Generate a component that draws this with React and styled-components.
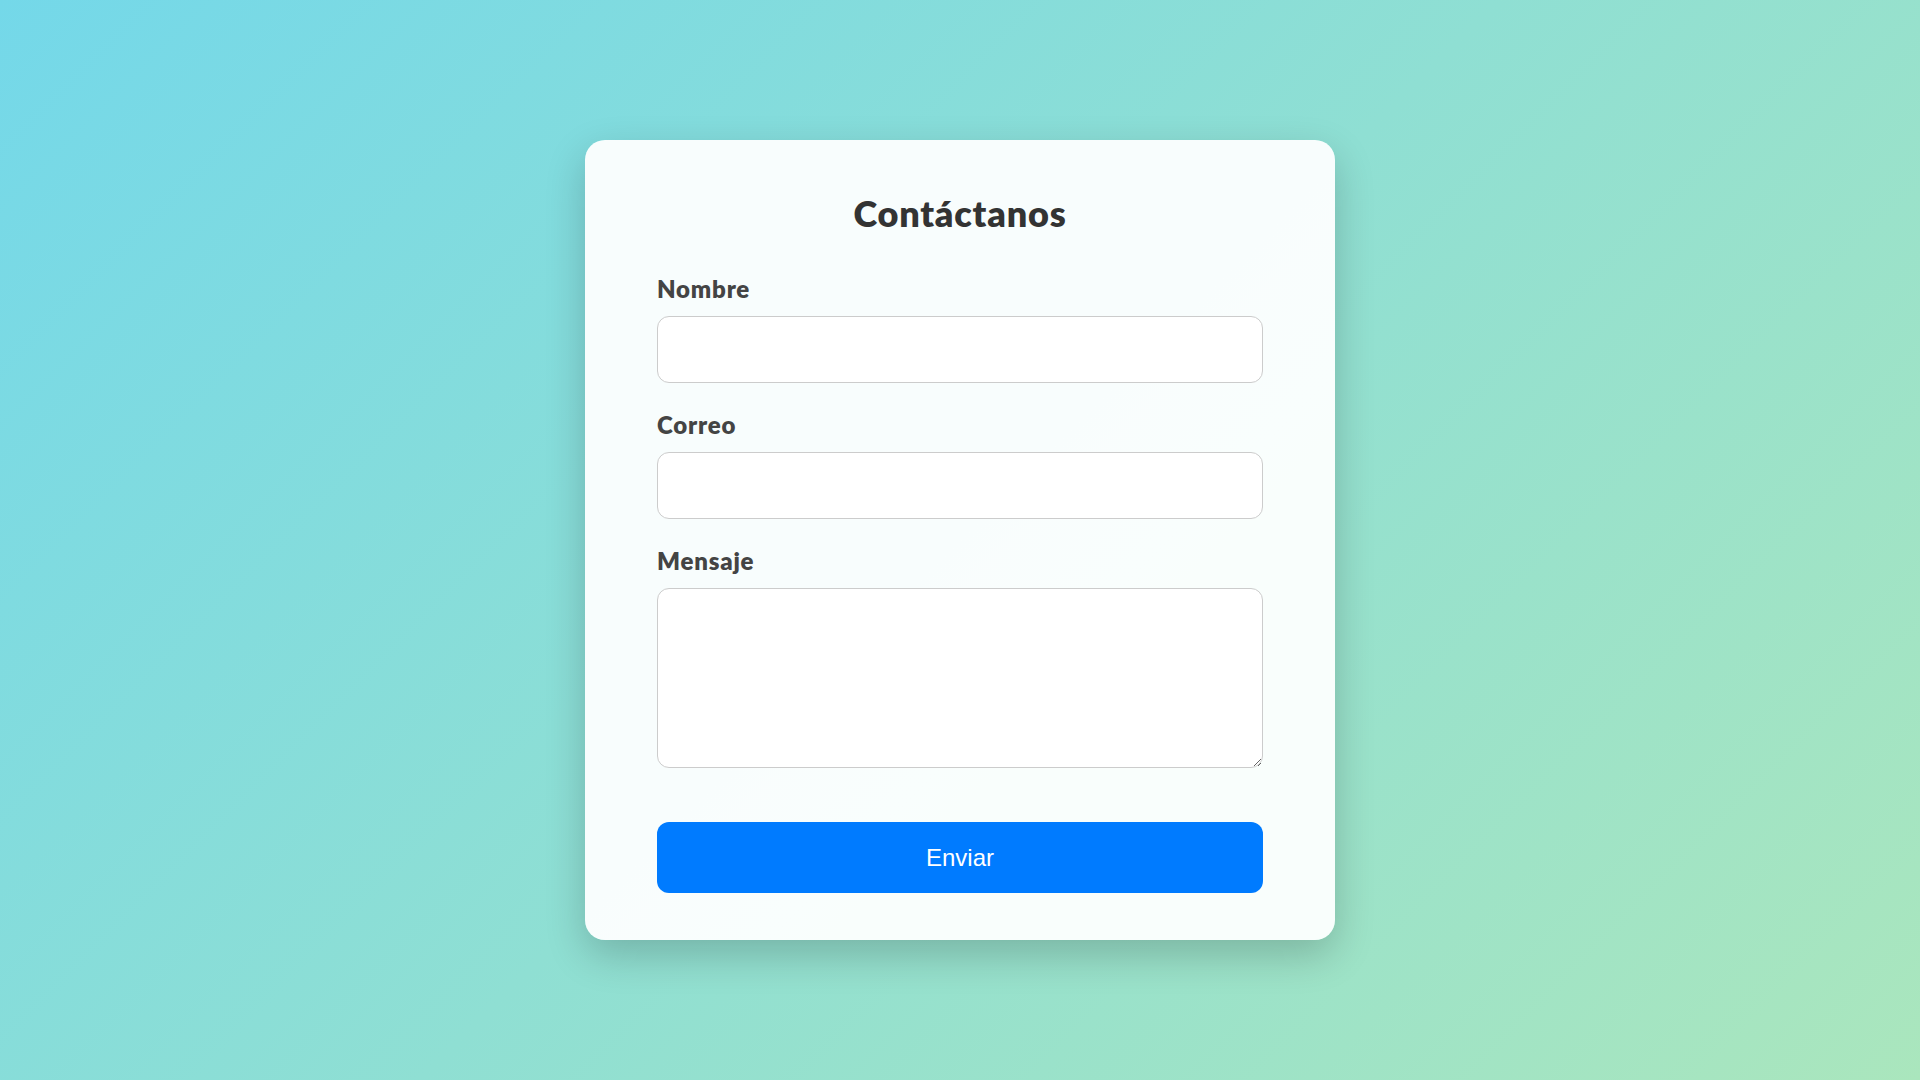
import React, { useState } from 'react';
import styled, { createGlobalStyle } from 'styled-components';

const GlobalStyle = createGlobalStyle`
    * {
        box-sizing: border-box;
    }

    body {
        margin: 0;
        font-family: 'Lato', 'Noto Sans', sans-serif;
    }
`;

const App = () => {

    const [form, setForm] = useState({ nombre: '', correo: '', mensaje: '' });

    const handleChange = (e) => {
        setForm({ ...form, [e.target.name]: e.target.value });
    }

    const handleSubmit = (e) => {
        e.preventDefault();
    }

    return (
        <Page>
            <GlobalStyle />
            <Card onSubmit={handleSubmit}>
                <Title>Contáctanos</Title>

                <Group>
                    <Label htmlFor='nombre'>Nombre</Label>
                    <Input id='nombre' name='nombre' type='text' value={form.nombre} onChange={handleChange} />
                </Group>

                <Group>
                    <Label htmlFor='correo'>Correo</Label>
                    <Input id='correo' name='correo' type='email' value={form.correo} onChange={handleChange} />
                </Group>

                <Group>
                    <Label htmlFor='mensaje'>Mensaje</Label>
                    <TextArea id='mensaje' name='mensaje' value={form.mensaje} onChange={handleChange} />
                </Group>

                <Button type='submit'>Enviar</Button>
            </Card>
        </Page>
    )
}

export default App


const Page = styled.div`
    min-height: 100vh;
    display: flex;
    justify-content: center;
    align-items: center;
    background: linear-gradient(135deg, #74d8e9 0%, #aae6bd 100%);
`;

const Card = styled.form`
    width: 750px;
    display: flex;
    flex-direction: column;
    padding: 52px 72px 47px;
    background: rgba(255, 255, 255, 0.94);
    border-radius: 20px;
    box-shadow: 0 15px 40px rgba(0, 0, 0, 0.2);
`;

const Title = styled.h2`
    margin: 0 0 39px;
    text-align: center;
    font-size: 36px;
    line-height: 43px;
    font-weight: 800;
    letter-spacing: 0.8px;
    color: #333;
`;

const Group = styled.div`
    display: flex;
    flex-direction: column;
    margin-bottom: 27px;
`;

const Label = styled.label`
    margin-bottom: 13px;
    font-size: 24px;
    line-height: 29px;
    font-weight: 800;
    letter-spacing: 0.8px;
    color: #444;
`;

const Input = styled.input`
    height: 67px;
    padding: 0 16px;
    border: 1px solid #ccc;
    border-radius: 12px;
    background: #fff;
    font-size: 18px;
    font-family: 'Lato', sans-serif;
    outline: none;
`;

const TextArea = styled.textarea`
    height: 180px;
    padding: 12px 16px;
    border: 1px solid #ccc;
    border-radius: 12px;
    background: #fff;
    font-size: 18px;
    font-family: 'Lato', sans-serif;
    outline: none;
`;

const Button = styled.button`
    margin-top: 27px;
    height: 71px;
    border: 0;
    border-radius: 12px;
    background: #007bff;
    color: #fff;
    font-family: 'Liberation Sans', Arial, sans-serif;
    font-size: 24px;
    cursor: pointer;
`;
